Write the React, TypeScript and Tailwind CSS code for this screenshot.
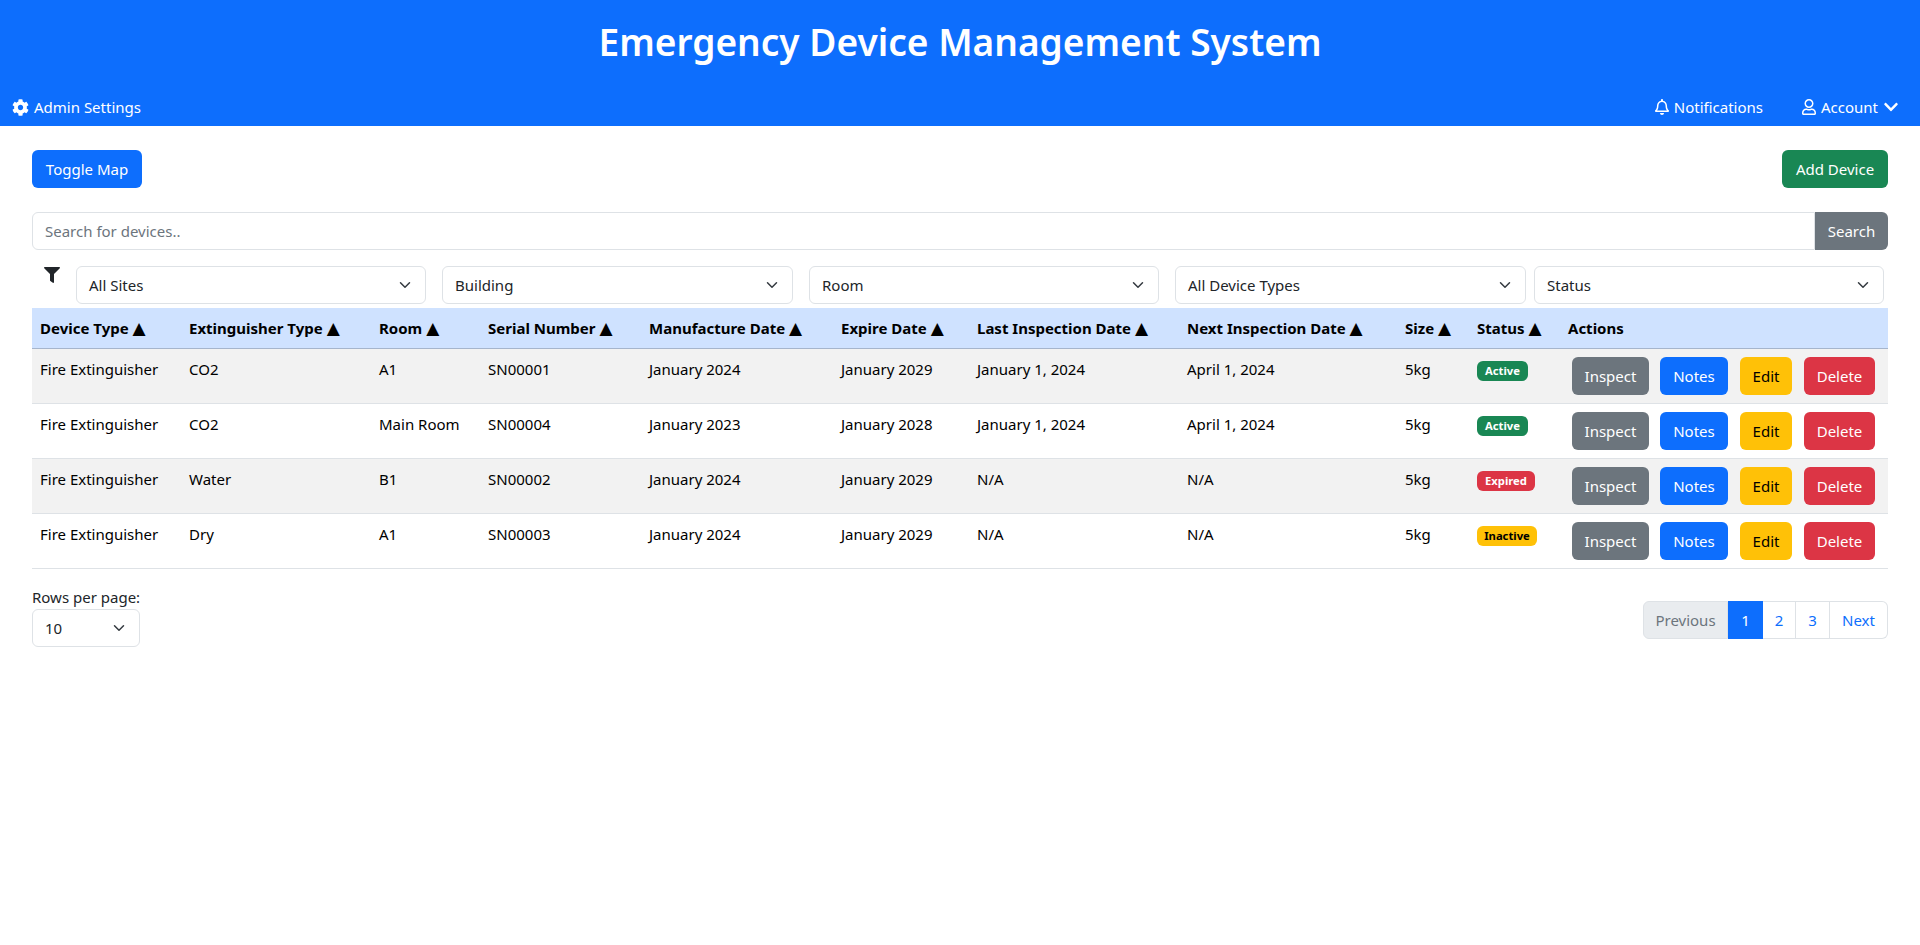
import React from "react";
import { FaCog, FaRegBell, FaRegUser, FaChevronDown, FaFilter } from "react-icons/fa";

const font = "font-['Noto_Sans','Liberation_Sans',sans-serif]";

function Chevron() {
  return (
    <svg viewBox="0 0 16 16" className="w-4 h-3 shrink-0" fill="none" stroke="#343a40" strokeWidth="2" strokeLinecap="round" strokeLinejoin="round">
      <path d="m2 5 6 6 6-6" />
    </svg>
  );
}

function Select({ label, className }: { label: string; className: string }) {
  return (
    <div className={`h-[38px] flex items-center justify-between border border-[#dee2e6] rounded-md bg-white pl-3 pr-3 text-[#212529] ${className}`}>
      <span>{label}</span>
      <Chevron />
    </div>
  );
}

function Btn({ label, className }: { label: string; className: string }) {
  return (
    <button className={`h-[38px] rounded-md flex items-center justify-center ${className}`}>{label}</button>
  );
}

const cols = [
  { label: "Device Type", w: "w-[149px]" },
  { label: "Extinguisher Type", w: "w-[190px]" },
  { label: "Room", w: "w-[109px]" },
  { label: "Serial Number", w: "w-[161px]" },
  { label: "Manufacture Date", w: "w-[192px]" },
  { label: "Expire Date", w: "w-[136px]" },
  { label: "Last Inspection Date", w: "w-[210px]" },
  { label: "Next Inspection Date", w: "w-[218px]" },
  { label: "Size", w: "w-[72px]" },
  { label: "Status", w: "w-[91px]" },
];

const rows = [
  ["Fire Extinguisher", "CO2", "A1", "SN00001", "January 2024", "January 2029", "January 1, 2024", "April 1, 2024", "5kg", "Active"],
  ["Fire Extinguisher", "CO2", "Main Room", "SN00004", "January 2023", "January 2028", "January 1, 2024", "April 1, 2024", "5kg", "Active"],
  ["Fire Extinguisher", "Water", "B1", "SN00002", "January 2024", "January 2029", "N/A", "N/A", "5kg", "Expired"],
  ["Fire Extinguisher", "Dry", "A1", "SN00003", "January 2024", "January 2029", "N/A", "N/A", "5kg", "Inactive"],
];

function Badge({ status }: { status: string }) {
  const cls =
    status === "Active"
      ? "bg-[#198754] text-white w-[51px]"
      : status === "Expired"
      ? "bg-[#dc3545] text-white w-[58px]"
      : "bg-[#ffc107] text-black w-[60px]";
  return (
    <span className={`inline-flex h-5 items-center justify-center rounded-md text-[11.25px] font-bold ${cls}`}>{status}</span>
  );
}

export default function App() {
  return (
    <div className={`${font} text-[15px] leading-6 min-h-[945px] bg-white text-[#212529]`}>
      <header className="h-[126px] bg-[#0d6efd] text-white flex flex-col">
        <h1 className="text-[37.1px] leading-[48px] font-semibold text-center pt-[18px] h-[88px]">
          Emergency Device Management System
        </h1>
        <nav className="flex items-center justify-between h-[38px] pl-[12px] pr-[21px]">
          <span className="flex items-center gap-[5px]"><FaCog className="w-[17px] h-[17px]" />Admin Settings</span>
          <div className="flex items-center gap-[38px]">
            <span className="flex items-center gap-1"><FaRegBell className="w-4 h-4" />Notifications</span>
            <span className="flex items-center gap-1"><FaRegUser className="w-4 h-4" />Account<FaChevronDown className="w-4 h-4 ml-px" /></span>
          </div>
        </nav>
      </header>

      <main className="px-8 pt-6">
        <div className="flex justify-between">
          <Btn label="Toggle Map" className="bg-[#0d6efd] text-white w-[110px]" />
          <Btn label="Add Device" className="bg-[#198754] text-white w-[106px]" />
        </div>

        <div className="flex h-[38px] mt-6">
          <div className="flex-1 border border-[#dee2e6] rounded-l-md flex items-center pl-3 text-[#6c757d]">Search for devices..</div>
          <Btn label="Search" className="bg-[#6c757d] text-white w-[73px] rounded-l-none" />
        </div>

        <div className="flex mt-4 items-start">
          <div className="w-[44px] pl-3 pt-px"><FaFilter className="w-4 h-4 text-[#212529]" /></div>
          <div className="flex gap-4">
            <Select label="All Sites" className="w-[350px]" />
            <Select label="Building" className="w-[351px]" />
            <Select label="Room" className="w-[350px]" />
            <Select label="All Device Types" className="w-[351px] mr-[-8px]" />
            <Select label="Status" className="w-[350px]" />
          </div>
        </div>

        <table className="mt-1 w-full table-fixed border-collapse text-black">
          <thead>
            <tr className="bg-[#cfe2ff] border-b border-[#a6b5cc] h-[40px]">
              {cols.map((c) => (
                <th key={c.label} className={`${c.w} px-2 text-left font-bold whitespace-nowrap`}>
                  {c.label} <span className="font-['DejaVu_Sans'] text-[17px] font-normal">▲</span>
                </th>
              ))}
              <th className="px-2 text-left font-bold">Actions</th>
            </tr>
          </thead>
          <tbody>
            {rows.map((r, i) => (
              <tr key={i} className={`h-[55px] border-b border-[#dee2e6] ${i % 2 === 0 ? "bg-[#f2f2f2]" : "bg-white"}`}>
                {r.map((c, j) => (
                  <td key={j} className="px-2 pt-2 align-top whitespace-nowrap">
                    {j === 9 ? <Badge status={c} /> : c}
                  </td>
                ))}
                <td className="px-2 pt-2 align-top">
                  <div className="flex gap-3 pl-1">
                    <Btn label="Inspect" className="bg-[#6c757d] text-white w-[77px] mr-[-1px]" />
                    <Btn label="Notes" className="bg-[#0d6efd] text-white w-[68px]" />
                    <Btn label="Edit" className="bg-[#ffc107] text-black w-[52px]" />
                    <Btn label="Delete" className="bg-[#dc3545] text-white w-[71px]" />
                  </div>
                </td>
              </tr>
            ))}
          </tbody>
        </table>

        <div className="flex justify-between mt-[17px]">
          <div>
            <div className="leading-[23px]">Rows per page:</div>
            <Select label="10" className="w-[108px]" />
          </div>
          <div className="flex h-[38px] mt-[15px]">
            <span className="w-[85px] flex items-center justify-center bg-[#e9ecef] border border-[#dee2e6] rounded-l-md text-[#6c757d]">Previous</span>
            <span className="w-[35px] flex items-center justify-center bg-[#0d6efd] text-white">1</span>
            <span className="w-[33px] flex items-center justify-center border border-l-0 border-[#dee2e6] text-[#0d6efd]">2</span>
            <span className="w-[34px] flex items-center justify-center border border-l-0 border-[#dee2e6] text-[#0d6efd]">3</span>
            <span className="w-[58px] flex items-center justify-center border border-l-0 border-[#dee2e6] rounded-r-md text-[#0d6efd]">Next</span>
          </div>
        </div>
      </main>
    </div>
  );
}
